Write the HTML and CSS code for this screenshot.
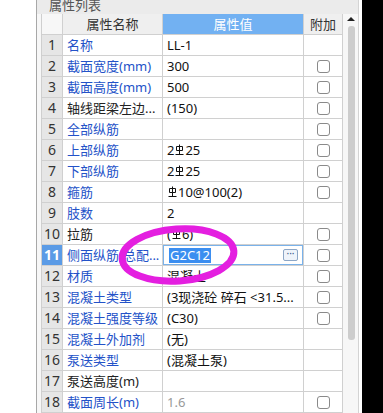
FILE: index.html
```html
<!DOCTYPE html>
<html>

<head>
  <meta charset="UTF-8">
  <title>属性列表</title>
  <link rel="stylesheet" href="styles.css">
</head>

<body>
  <div class="screen">
    <div class="left-gap"></div>

    <div class="panel">
      <div class="panel-title"><span>属性列表</span></div>

      <div class="panel-body">
        <div class="grid">
          <div class="row head">
            <div class="num"></div>
            <div class="name">属性名称</div>
            <div class="val">属性值</div>
            <div class="extra">附加</div>
          </div>
          <div class="row">
            <div class="num">1</div>
            <div class="name">名称</div>
            <div class="val">LL-1</div>
            <div class="extra"></div>
          </div>
          <div class="row">
            <div class="num">2</div>
            <div class="name">截面宽度(mm)</div>
            <div class="val">300</div>
            <div class="extra"><span class="box"></span></div>
          </div>
          <div class="row">
            <div class="num">3</div>
            <div class="name">截面高度(mm)</div>
            <div class="val">500</div>
            <div class="extra"><span class="box"></span></div>
          </div>
          <div class="row">
            <div class="num">4</div>
            <div class="name plain">轴线距梁左边...</div>
            <div class="val">(150)</div>
            <div class="extra"><span class="box"></span></div>
          </div>
          <div class="row">
            <div class="num">5</div>
            <div class="name">全部纵筋</div>
            <div class="val"></div>
            <div class="extra"><span class="box"></span></div>
          </div>
          <div class="row">
            <div class="num">6</div>
            <div class="name">上部纵筋</div>
            <div class="val">2<svg class="rb" viewBox="0 0 9 12"><path d="M4.5 0.5V10.5M1.5 2.5H7.5V6.5H1.5ZM0.5 10.5H8.5"/></svg>25</div>
            <div class="extra"><span class="box"></span></div>
          </div>
          <div class="row">
            <div class="num">7</div>
            <div class="name">下部纵筋</div>
            <div class="val">2<svg class="rb" viewBox="0 0 9 12"><path d="M4.5 0.5V10.5M1.5 2.5H7.5V6.5H1.5ZM0.5 10.5H8.5"/></svg>25</div>
            <div class="extra"><span class="box"></span></div>
          </div>
          <div class="row">
            <div class="num">8</div>
            <div class="name">箍筋</div>
            <div class="val"><svg class="rb" viewBox="0 0 9 12"><path d="M4.5 0.5V10.5M1.5 2.5H7.5V6.5H1.5ZM0.5 10.5H8.5"/></svg>10@100(2)</div>
            <div class="extra"><span class="box"></span></div>
          </div>
          <div class="row">
            <div class="num">9</div>
            <div class="name">肢数</div>
            <div class="val">2</div>
            <div class="extra"></div>
          </div>
          <div class="row">
            <div class="num">10</div>
            <div class="name plain">拉筋</div>
            <div class="val">(<svg class="rb" viewBox="0 0 9 12"><path d="M4.5 0.5V10.5M1.5 2.5H7.5V6.5H1.5ZM0.5 10.5H8.5"/></svg>6)</div>
            <div class="extra"><span class="box"></span></div>
          </div>
          <div class="row sel">
            <div class="num">11</div>
            <div class="name">侧面纵筋(总配...</div>
            <div class="val">
              <div class="editor">
                <span class="hl">G2C12</span>
                <span class="dots">···</span>
              </div>
            </div>
            <div class="extra"><span class="box"></span></div>
          </div>
          <div class="row">
            <div class="num">12</div>
            <div class="name">材质</div>
            <div class="val">混凝土</div>
            <div class="extra"><span class="box"></span></div>
          </div>
          <div class="row">
            <div class="num">13</div>
            <div class="name">混凝土类型</div>
            <div class="val">(3现浇砼 碎石 &lt;31.5...</div>
            <div class="extra"><span class="box"></span></div>
          </div>
          <div class="row">
            <div class="num">14</div>
            <div class="name">混凝土强度等级</div>
            <div class="val">(C30)</div>
            <div class="extra"><span class="box"></span></div>
          </div>
          <div class="row">
            <div class="num">15</div>
            <div class="name">混凝土外加剂</div>
            <div class="val">(无)</div>
            <div class="extra"></div>
          </div>
          <div class="row">
            <div class="num">16</div>
            <div class="name">泵送类型</div>
            <div class="val">(混凝土泵)</div>
            <div class="extra"></div>
          </div>
          <div class="row">
            <div class="num">17</div>
            <div class="name plain">泵送高度(m)</div>
            <div class="val"></div>
            <div class="extra"></div>
          </div>
          <div class="row">
            <div class="num">18</div>
            <div class="name">截面周长(m)</div>
            <div class="val muted">1.6</div>
            <div class="extra"><span class="box"></span></div>
          </div>
        </div>

        <div class="scroll">
          <div class="arrow"></div>
          <div class="thumb"></div>
        </div>
      </div>
    </div>

    <div class="gap"></div>
    <div class="black"></div>

    <svg class="mark" width="383" height="413" viewBox="0 0 383 413">
      <ellipse cx="178" cy="255" rx="56" ry="26" transform="rotate(-4 178 255)" />
    </svg>
  </div>
</body>

</html>
```

FILE: styles.css
```css
* {
  box-sizing: border-box;
}

body {
  margin: 0;
  background-color: #fff;
  font-family: "Noto Sans", "Noto Sans CJK SC", sans-serif;
  font-size: 13px;
  overflow: hidden;
}

.screen {
  position: relative;
  display: flex;
  height: 413px;
}

.left-gap {
  width: 36px;
}

.panel {
  width: 323px;
  display: flex;
  flex-direction: column;
  background-color: #f7f7f7;
  border-left: 1px solid #a8a8a8;
  border-right: 1px solid #d4d4d4;
}

.panel-title {
  height: 16px;
  overflow: hidden;
  background-color: #ebebeb;
  color: #555;
  padding-left: 12px;
}

.panel-title span {
  display: block;
  margin-top: -5px;
  line-height: 20px;
}

.panel-body {
  flex: 1;
  display: flex;
  padding-left: 4px;
}

.grid {
  width: 302px;
  border-left: 1px solid #cfcfcf;
  background-color: #fff;
}

.row {
  display: grid;
  grid-template-columns: 21px 100px 141px 39px;
  height: 21px;
}

.row > div {
  border-right: 1px solid #d0d0d0;
  border-bottom: 1px solid #d0d0d0;
  line-height: 20px;
  white-space: nowrap;
  overflow: hidden;
}

.num {
  background-color: #e6e6e6;
  text-align: center;
  color: #333;
  font-size: 14px;
}

.name {
  padding-left: 4px;
  color: #2352c8;
}

.name.plain {
  color: #222;
}

.val {
  padding-left: 4px;
  color: #111;
}

.val.muted {
  color: #999;
}

.rb {
  width: 9px;
  height: 12px;
  margin: 0 1px;
  vertical-align: -1px;
  fill: none;
  stroke: #111;
  stroke-width: 1;
}

.extra {
  display: flex;
  align-items: center;
  justify-content: center;
}

.box {
  width: 13px;
  height: 13px;
  border: 1px solid #8a8a8a;
  border-radius: 3px;
  background-color: #fff;
}

.head .num {
  background-color: #f7f7f7;
}

.head .name {
  padding-left: 0;
  text-align: center;
  color: #333;
  background-color: #efefef;
}

.head .val {
  padding-left: 0;
  text-align: center;
  color: #fff;
  background-color: #72b1f2;
}

.head .extra {
  color: #333;
  background-color: #efefef;
}

.sel .num {
  background-color: #5b9be6;
  color: #fff;
  font-weight: bold;
}

.sel .val {
  padding-left: 0;
}

.editor {
  height: 20px;
  display: flex;
  align-items: center;
  justify-content: space-between;
  border: 1px solid #7ab2ea;
  padding: 0 4px 0 5px;
}

.hl {
  background-color: #3b8ef0;
  color: #fff;
  line-height: 15px;
  padding: 0 1px;
}

.dots {
  width: 15px;
  height: 12px;
  border: 1px solid #8ca6c6;
  border-radius: 2px;
  background-color: #eef3fa;
  color: #3a5a8a;
  font-size: 10px;
  line-height: 7px;
  text-align: center;
}

.scroll {
  width: 8px;
  margin-left: 4px;
  display: flex;
  flex-direction: column;
  align-items: center;
}

.arrow {
  margin-top: 3px;
  width: 0;
  height: 0;
  border-left: 4px solid transparent;
  border-right: 4px solid transparent;
  border-bottom: 4px solid #222;
}

.thumb {
  margin-top: 5px;
  width: 7px;
  height: 314px;
  border-radius: 3px;
  background-color: #cdcdcd;
}

.gap {
  width: 3px;
}

.black {
  flex: 1;
  background-color: #000;
}

.mark {
  position: absolute;
  left: 0;
  top: 0;
  pointer-events: none;
}

.mark ellipse {
  fill: none;
  stroke: #e41fe0;
  stroke-width: 7;
}
```
